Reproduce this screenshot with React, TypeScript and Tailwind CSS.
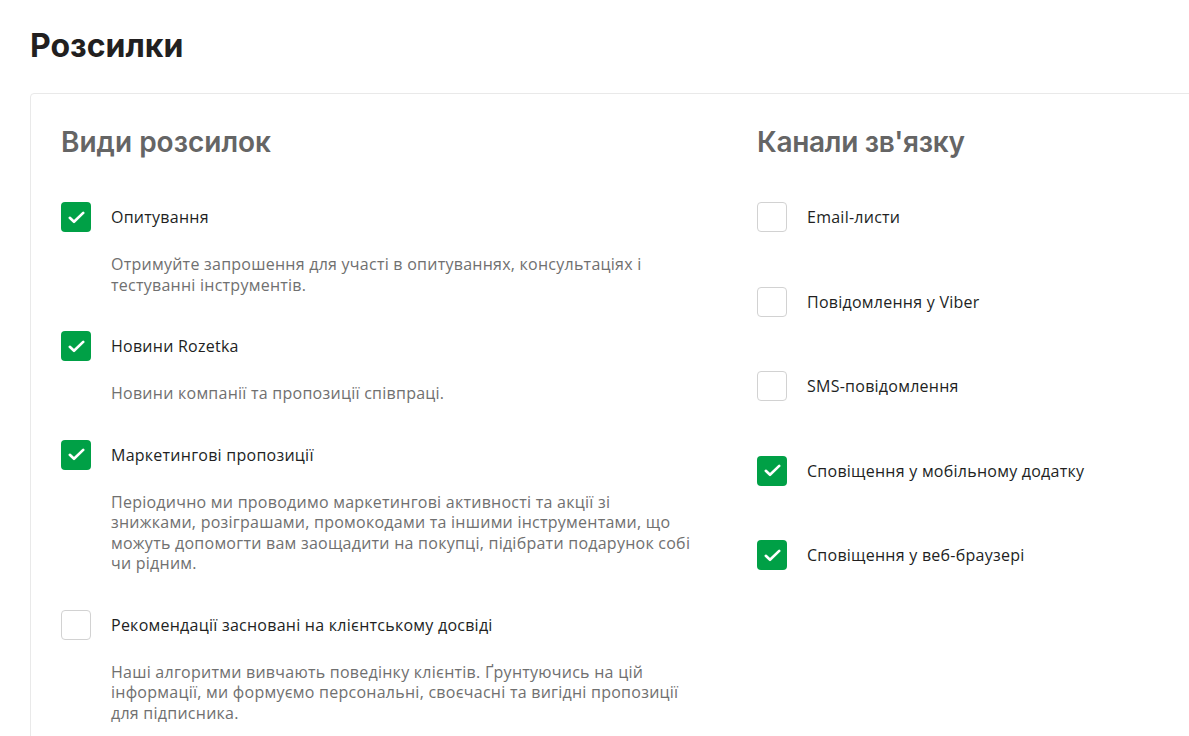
import React from 'react';

interface MailingType {
    label: string;
    description: string;
    checked: boolean;
}

const MAILING_TYPES: MailingType[] = [
    {
        label: 'Опитування',
        description: 'Отримуйте запрошення для участі в опитуваннях, консультаціях і тестуванні інструментів.',
        checked: true,
    },
    {
        label: 'Новини Rozetka',
        description: 'Новини компанії та пропозиції співпраці.',
        checked: true,
    },
    {
        label: 'Маркетингові пропозиції',
        description:
            'Періодично ми проводимо маркетингові активності та акції зі знижками, розіграшами, промокодами та іншими інструментами, що можуть допомогти вам заощадити на покупці, підібрати подарунок собі чи рідним.',
        checked: true,
    },
    {
        label: 'Рекомендації засновані на клієнтському досвіді',
        description:
            'Наші алгоритми вивчають поведінку клієнтів. Ґрунтуючись на цій інформації, ми формуємо персональні, своєчасні та вигідні пропозиції для підписника.',
        checked: false,
    },
];

const CHANNELS = [
    { label: 'Email-листи', checked: false },
    { label: 'Повідомлення у Viber', checked: false },
    { label: 'SMS-повідомлення', checked: false },
    { label: 'Сповіщення у мобільному додатку', checked: true },
    { label: 'Сповіщення у веб-браузері', checked: true },
];

const Checkbox: React.FC<{ checked: boolean }> = ({ checked }) => (
    <span
        className={
            checked
                ? 'flex h-[30px] w-[30px] shrink-0 items-center justify-center rounded-[4px] bg-[#00a046]'
                : 'flex h-[30px] w-[30px] shrink-0 items-center justify-center rounded-[4px] border border-[#d2d2d2] bg-white'
        }
    >
        {checked && (
            <svg width="17" height="13" viewBox="0 0 17 13" fill="none">
                <path d="M1.8 6.8 6 10.8 15.2 1.9" stroke="white" strokeWidth="2.6" strokeLinecap="round" strokeLinejoin="round" />
            </svg>
        )}
    </span>
);

export default function App() {
    return (
        <div className="h-[736px] w-[1189px] overflow-hidden bg-white text-[#221f1f] tracking-[0.25px]" style={{ fontFamily: '"Open Sans", "Noto Sans", sans-serif' }}>
            <h1 className="px-[30px] pt-[26px] text-[32px] font-bold leading-[40px] tracking-normal text-[#221f1f]" style={{ fontFamily: 'Inter, sans-serif' }}>
                Розсилки
            </h1>
            <div className="ml-[30px] mt-[27px] min-h-[800px] w-[1400px] rounded-tl-[4px] border border-[#e9e9e9] px-[30px] pt-[30px]">
                <div className="flex">
                    <div className="w-[696px]">
                        <h2 className="text-[28px] font-semibold leading-[36px] tracking-normal text-[#656565]" style={{ fontFamily: 'Inter, sans-serif' }}>
                            Види розсилок
                        </h2>
                        <div className="mt-[42px] flex flex-col gap-[36px]">
                            {MAILING_TYPES.map((item) => (
                                <div key={item.label}>
                                    <div className="flex items-center gap-[20px]">
                                        <Checkbox checked={item.checked} />
                                        <span className="text-[16px] leading-[20px]">{item.label}</span>
                                    </div>
                                    <p className="ml-[50px] mt-[22px] w-[583px] text-[16px] leading-[20.5px] text-[#707070]">
                                        {item.description}
                                    </p>
                                </div>
                            ))}
                        </div>
                    </div>
                    <div>
                        <h2 className="text-[28px] font-semibold leading-[36px] tracking-[-0.3px] text-[#656565]" style={{ fontFamily: 'Inter, sans-serif' }}>
                            Канали зв'язку
                        </h2>
                        <div className="mt-[42px] flex flex-col gap-[54.5px]">
                            {CHANNELS.map((c) => (
                                <div key={c.label} className="flex items-center gap-[20px]">
                                    <Checkbox checked={c.checked} />
                                    <span className="text-[16px] leading-[20px]">{c.label}</span>
                                </div>
                            ))}
                        </div>
                    </div>
                </div>
            </div>
        </div>
    );
}
